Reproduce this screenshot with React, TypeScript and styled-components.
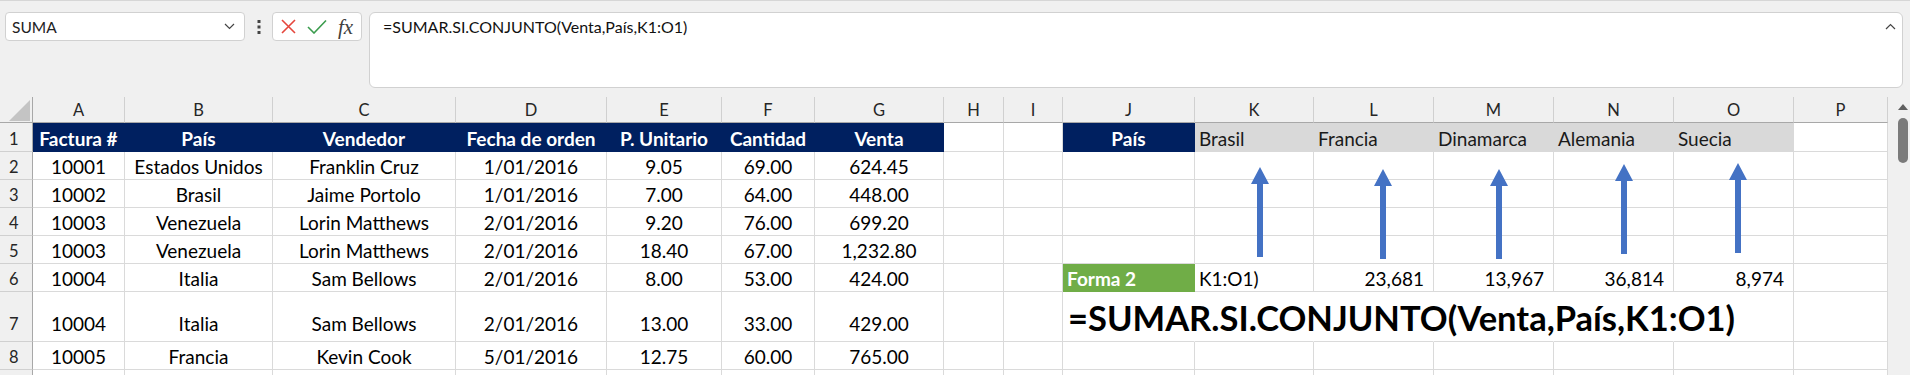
import styled, { createGlobalStyle } from 'styled-components';

const NAVY = '#002060';
const GRAY = '#d9d9d9';
const GREEN = '#70ad47';
const GRID = '#dadada';

const GlobalStyle = createGlobalStyle`
  html, body {
    margin: 0;
    padding: 0;
    overflow: hidden;
    background: #f0f0f0;
  }
  body {
    font-family: Lato, 'Open Sans', sans-serif;
    color: #000;
  }
`;

const Page = styled.div`
  width: 1910px;
  height: 375px;
  overflow: hidden;
  border-top: 1px solid #d6d6d6;
  box-sizing: border-box;
`;

const Toolbar = styled.div`
  display: flex;
  align-items: flex-start;
  height: 87px;
  margin-bottom: 9px;
  padding: 11px 7px 0 5px;
  box-sizing: border-box;
`;

const NameBox = styled.div`
  width: 240px;
  height: 29px;
  box-sizing: border-box;
  display: flex;
  align-items: center;
  justify-content: space-between;
  padding: 0 9px 0 6px;
  background: #fff;
  border: 1px solid #d1d1d1;
  border-radius: 4px;
  font-size: 15.5px;
  color: #222;
`;

const Dots = styled.div`
  width: 27px;
  height: 29px;
  display: flex;
  align-items: center;
  justify-content: center;
`;

const FxBox = styled.div`
  width: 90px;
  height: 29px;
  box-sizing: border-box;
  display: flex;
  align-items: center;
  gap: 11px;
  padding-left: 8px;
  background: #fff;
  border: 1px solid #d1d1d1;
  border-radius: 4px;
`;

const FxLabel = styled.span`
  font-family: 'Liberation Serif', serif;
  font-style: italic;
  font-size: 21px;
  line-height: 20px;
  color: #404040;
`;

const FormulaBar = styled.div`
  flex: 1;
  height: 76px;
  margin-left: 7px;
  box-sizing: border-box;
  display: flex;
  justify-content: space-between;
  align-items: flex-start;
  padding: 4px 6px 0 13px;
  background: #fff;
  border: 1px solid #d1d1d1;
  border-radius: 6px;
  font-size: 16px;
  line-height: 20px;
  color: #111;

  svg {
    margin-top: 6px;
  }
`;

const Sheet = styled.div`
  position: relative;
  display: flex;
`;

const Grid = styled.div<{ $cols: number[]; $rows: number[] }>`
  display: grid;
  grid-template-columns: ${(p) => p.$cols.map((c) => `${c}px`).join(' ')};
  grid-template-rows: ${(p) => p.$rows.map((r) => `${r}px`).join(' ')};
  background: #fff;
`;

const Corner = styled.div`
  background: #f0f0f0;
  border-right: 1px solid #a8a8a8;
  border-bottom: 1px solid #a8a8a8;
  display: flex;
  align-items: flex-end;
  justify-content: flex-end;
  padding: 0 2px 1px 0;
`;

const ColHead = styled.div`
  background: #f0f0f0;
  border-right: 1px solid #d0d0d0;
  border-bottom: 1px solid #a8a8a8;
  display: flex;
  align-items: center;
  justify-content: center;
  font-size: 16.5px;
  color: #262626;
`;

const RowHead = styled.div<{ $pb: number }>`
  background: #f0f0f0;
  border-right: 1px solid #a8a8a8;
  border-bottom: 1px solid #d0d0d0;
  display: flex;
  align-items: flex-end;
  padding: 0 0 ${(p) => p.$pb}px 9px;
  font-size: 16.5px;
  line-height: 24px;
  color: #262626;
`;

type Align = 'left' | 'center' | 'right';

const Cell = styled.div<{
  $fill?: string;
  $align: Align;
  $bold?: boolean;
  $color?: string;
  $open?: boolean;
  $big?: boolean;
  $pb: number;
}>`
  min-width: 0;
  display: flex;
  align-items: flex-end;
  justify-content: ${(p) =>
    p.$align === 'left' ? 'flex-start' : p.$align === 'right' ? 'flex-end' : 'center'};
  padding: 0 ${(p) => (p.$align === 'right' ? 9 : 0)}px ${(p) => (p.$big ? p.$pb - 2 : p.$pb)}px
    ${(p) => (p.$align === 'left' ? (p.$big ? 5 : 4) : 0)}px;
  background: ${(p) => p.$fill || 'transparent'};
  border-right: 1px solid ${(p) => (p.$open ? 'transparent' : p.$fill || GRID)};
  border-bottom: 1px solid ${(p) => p.$fill || GRID};
  white-space: nowrap;
  overflow: visible;
  font-size: ${(p) => (p.$big ? 34.5 : 19)}px;
  line-height: ${(p) => (p.$big ? 41 : 24)}px;
  font-weight: ${(p) => (p.$bold ? 700 : 400)};
  color: ${(p) => p.$color || '#000'};
`;

const ScrollTrack = styled.div`
  width: 22px;
  box-sizing: border-box;
  display: flex;
  flex-direction: column;
  align-items: center;
  padding: 7px 2px 0 9px;
  background: #f0f0f0;
`;

const Thumb = styled.div`
  width: 10px;
  height: 45px;
  margin-top: 8px;
  border-radius: 5px;
  background: #7b7b7b;
`;

const Arrows = styled.svg`
  position: absolute;
  left: 0;
  top: 0;
  pointer-events: none;
`;

type CellSpec = {
  t?: string;
  fill?: string;
  align?: Align;
  bold?: boolean;
  color?: string;
  open?: boolean;
  big?: boolean;
};

const COLS = [33, 92, 148, 183, 151, 115, 93, 129, 60, 59, 132, 119, 120, 120, 120, 120, 94];
const LETTERS = ['A', 'B', 'C', 'D', 'E', 'F', 'G', 'H', 'I', 'J', 'K', 'L', 'M', 'N', 'O', 'P'];
const ROW_HEIGHTS = [29, 28, 28, 28, 28, 28, 50, 28, 28];
const ROW_PB = [0, 0, 0, 0, 0, 0, 5, 0, 0];

const head = (t: string): CellSpec => ({ t, fill: NAVY, bold: true, color: '#fff' });
const country = (t: string): CellSpec => ({ t, fill: GRAY, align: 'left', color: '#1a1a1a' });
const num = (t: string): CellSpec => ({ t, align: 'right' });
const empty = (n: number): CellSpec[] => Array.from({ length: n }, () => ({}));

const sales = [
  ['10001', 'Estados Unidos', 'Franklin Cruz', '1/01/2016', '9.05', '69.00', '624.45'],
  ['10002', 'Brasil', 'Jaime Portolo', '1/01/2016', '7.00', '64.00', '448.00'],
  ['10003', 'Venezuela', 'Lorin Matthews', '2/01/2016', '9.20', '76.00', '699.20'],
  ['10003', 'Venezuela', 'Lorin Matthews', '2/01/2016', '18.40', '67.00', '1,232.80'],
  ['10004', 'Italia', 'Sam Bellows', '2/01/2016', '8.00', '53.00', '424.00'],
  ['10004', 'Italia', 'Sam Bellows', '2/01/2016', '13.00', '33.00', '429.00'],
  ['10005', 'Francia', 'Kevin Cook', '5/01/2016', '12.75', '60.00', '765.00'],
];

const rightSide: CellSpec[][] = [
  empty(7),
  empty(7),
  empty(7),
  empty(7),
  [
    { t: 'Forma 2', fill: GREEN, bold: true, color: '#fff', align: 'left' },
    { t: 'K1:O1)', align: 'left' },
    num('23,681'),
    num('13,967'),
    num('36,814'),
    num('8,974'),
    {},
  ],
  [
    { t: '=SUMAR.SI.CONJUNTO(Venta,País,K1:O1)', big: true, bold: true, open: true, align: 'left' },
    { open: true },
    { open: true },
    { open: true },
    { open: true },
    {},
    {},
  ],
  empty(7),
];

const ROWS: CellSpec[][] = [
  [
    ...['Factura #', 'País', 'Vendedor', 'Fecha de orden', 'P. Unitario', 'Cantidad', 'Venta'].map(head),
    {},
    {},
    head('País'),
    ...['Brasil', 'Francia', 'Dinamarca', 'Alemania', 'Suecia'].map(country),
    {},
  ],
  ...sales.map((r, i) => [...r.map((t) => ({ t })), {}, {}, ...rightSide[i]]),
  empty(16),
];

// arrow shapes in sheet coordinates (sheet top = page y 97)
const ARROWS = [
  { x: 1260, y1: 70, y2: 160 },
  { x: 1383, y1: 72, y2: 162 },
  { x: 1499, y1: 72, y2: 162 },
  { x: 1624, y1: 67, y2: 157 },
  { x: 1738, y1: 66, y2: 156 },
];

const arrowPoints = ({ x, y1, y2 }: { x: number; y1: number; y2: number }) =>
  [
    [x, y1],
    [x + 9, y1 + 17],
    [x + 3, y1 + 17],
    [x + 3, y2],
    [x - 3, y2],
    [x - 3, y1 + 17],
    [x - 9, y1 + 17],
  ]
    .map((p) => p.join(','))
    .join(' ');

const App = () => {
  return (
    <Page>
      <GlobalStyle />
      <Toolbar>
        <NameBox>
          <span>SUMA</span>
          <svg width="11" height="7" viewBox="0 0 11 7">
            <path d="M1 1l4.5 4.5L10 1" fill="none" stroke="#444" strokeWidth="1.2" />
          </svg>
        </NameBox>
        <Dots>
          <svg width="4" height="14" viewBox="0 0 4 14">
            <rect x="0.5" y="0" width="3" height="3" fill="#444" />
            <rect x="0.5" y="5.5" width="3" height="3" fill="#444" />
            <rect x="0.5" y="11" width="3" height="3" fill="#444" />
          </svg>
        </Dots>
        <FxBox>
          <svg width="15" height="15" viewBox="0 0 15 15">
            <path d="M1 1l13 13M14 1L1 14" stroke="#e5463c" strokeWidth="1.6" />
          </svg>
          <svg width="20" height="15" viewBox="0 0 20 15">
            <path d="M1 8l6 6L19 1.5" fill="none" stroke="#3b9c4e" strokeWidth="1.6" />
          </svg>
          <FxLabel>fx</FxLabel>
        </FxBox>
        <FormulaBar>
          <span>=SUMAR.SI.CONJUNTO(Venta,País,K1:O1)</span>
          <svg width="11" height="7" viewBox="0 0 11 7">
            <path d="M1 6l4.5-4.5L10 6" fill="none" stroke="#444" strokeWidth="1.2" />
          </svg>
        </FormulaBar>
      </Toolbar>

      <Sheet>
        <Grid $cols={COLS} $rows={[26, ...ROW_HEIGHTS]}>
          <Corner>
            <svg width="21" height="21" viewBox="0 0 21 21">
              <path d="M21 0V21H0Z" fill="#c4c4c4" />
            </svg>
          </Corner>
          {LETTERS.map((l) => (
            <ColHead key={l}>{l}</ColHead>
          ))}
          {ROWS.map((row, r) => [
            <RowHead key={`h${r}`} $pb={ROW_PB[r]}>
              {r + 1}
            </RowHead>,
            ...row.map((c, i) => (
              <Cell
                key={`${r}-${i}`}
                $fill={c.fill}
                $align={c.align || 'center'}
                $bold={c.bold}
                $color={c.color}
                $open={c.open}
                $big={c.big}
                $pb={ROW_PB[r]}
              >
                {c.t}
              </Cell>
            )),
          ])}
        </Grid>
        <ScrollTrack>
          <svg width="10" height="6" viewBox="0 0 10 6">
            <path d="M5 0L10 6H0Z" fill="#606060" />
          </svg>
          <Thumb />
        </ScrollTrack>
        <Arrows width="1888" height="280">
          {ARROWS.map((a) => (
            <polygon key={a.x} points={arrowPoints(a)} fill="#4472c4" />
          ))}
        </Arrows>
      </Sheet>
    </Page>
  );
};

export default App;
